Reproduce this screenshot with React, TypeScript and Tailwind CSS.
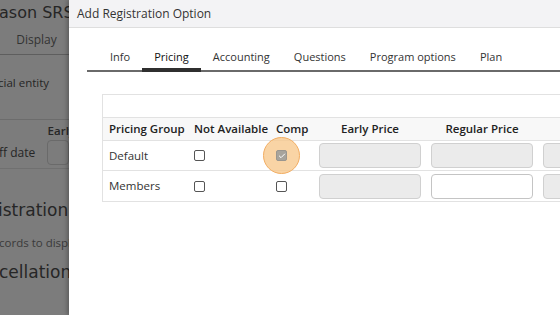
import { Check } from 'lucide-react';

const tabs = ['Info', 'Pricing', 'Accounting', 'Questions', 'Program options', 'Plan'];

// column widths for the pricing grid
const cols = 'grid grid-cols-[85px_82px_44px_112px_112px_112px]';

function Box({ checked, ring }: { checked?: boolean; ring?: boolean }) {
  return (
    <div className="relative w-[11px] h-[11px]">
      {ring && (
        <div className="absolute left-[-13px] top-[-13px] w-[37px] h-[37px] rounded-full bg-[#f7c98f]/80 border border-[#f2ad62]" />
      )}
      <div
        className={
          checked
            ? 'relative w-[11px] h-[11px] rounded-[2px] bg-[#a8a49c] border border-[#9a968f] flex items-center justify-center'
            : 'relative w-[11px] h-[11px] rounded-[2px] bg-white border border-[#555]'
        }
      >
        {checked && <Check size={8} strokeWidth={3} className="text-white" />}
      </div>
    </div>
  );
}

function Input({ disabled }: { disabled?: boolean }) {
  return (
    <div
      className={
        disabled
          ? 'w-[102px] h-[25px] rounded-[4px] border border-[#d0d0d0] bg-[#ebebeb]'
          : 'w-[102px] h-[25px] rounded-[4px] border border-[#c4c4c4] bg-white'
      }
    />
  );
}

export default function App() {
  const rows = [
    { name: 'Default', comp: true, regularDisabled: true },
    { name: 'Members', comp: false, regularDisabled: false },
  ];

  return (
    <div className="flex w-[560px] h-[315px] overflow-hidden bg-white">
      {/* page behind the drawer, dimmed */}
      <div
        className="w-[69px] shrink-0 h-full overflow-hidden bg-[#7c7c7c] text-[#262626] whitespace-nowrap"
        style={{ fontFamily: '"Open Sans", sans-serif' }}
      >
        <div className="h-[25px] text-[16px] leading-[25px] -ml-[1px]" style={{ fontFamily: '"DejaVu Sans", sans-serif' }}>
          ason SRS
        </div>
        <div className="h-[30px] border-b border-[#5e5e5e] flex items-center justify-center pl-[4px] text-[12px] text-[#333]">
          Display
        </div>
        <div className="h-[56px] flex items-center text-[11.5px] -ml-[2px]">cial entity</div>
        <div className="h-[9px] border-b border-[#6c6c6c]" />
        <div className="h-[19px] flex items-end justify-end text-[11.5px] font-semibold -mr-[6px]">Early</div>
        <div className="h-[27px] flex items-center gap-[12px] text-[12px]">
          <span className="-ml-[1px]">ff date</span>
          <div className="w-[40px] h-[25px] rounded-[4px] border border-[#6a6a6a]" />
        </div>
        <div className="border-t border-[#707070] mt-[2px]" />
        <div className="mt-[29px] text-[17px] leading-[24px] -ml-[2px]" style={{ fontFamily: '"DejaVu Sans", sans-serif' }}>
          istration
        </div>
        <div className="mt-[13px] text-[11.5px] leading-[16px] text-[#3a3a3a] -ml-[1px]">cords to displ</div>
        <div className="mt-[9px] text-[17px] leading-[24px] -ml-[1px]" style={{ fontFamily: '"DejaVu Sans", sans-serif' }}>
          cellation
        </div>
      </div>

      {/* drawer */}
      <div
        className="flex-1 h-full overflow-hidden bg-white shadow-[-2px_0_4px_rgba(0,0,0,0.25)]"
        style={{ fontFamily: '"Open Sans", sans-serif' }}
      >
        <div className="h-[28px] bg-[#f3f3f5] border-b border-[#dedede] flex items-center pl-[8px] text-[12px] text-[#333]">
          Add Registration Option
        </div>

        <div className="ml-[18px] mt-[15px] pl-[11px] flex border-b-2 border-[#6a6a6a] text-[11px] text-[#333] whitespace-nowrap">
          {tabs.map((t) => (
            <div
              key={t}
              className={
                t === 'Pricing'
                  ? 'px-3 pt-[5px] pb-[3px] leading-[17px] text-[#111] border-b-[4px] border-[#2f2f2f] -mb-[2px]'
                  : 'px-3 py-[5px] leading-[17px]'
              }
            >
              {t}
            </div>
          ))}
        </div>

        <div className="ml-[33px] mt-[22px] w-[600px] border border-[#e2e2e2] text-[11.5px] text-[#333] whitespace-nowrap">
          <div className="h-[23px] border-b border-[#e2e2e2]" />
          <div className={`${cols} h-[22px] items-center bg-[#f8f8f8] font-semibold text-[#222]`}>
            <div className="pl-[6px]">Pricing Group</div>
            <div className="pl-[6px]">Not Available</div>
            <div className="pl-[6px]">Comp</div>
            <div className="text-center">Early Price</div>
            <div className="text-center">Regular Price</div>
            <div className="text-center" />
          </div>
          {rows.map((r, i) => (
            <div
              key={r.name}
              className={`${cols} items-center border-t border-[#e2e2e2] ${i === 0 ? 'h-[30px]' : 'h-[31px]'}`}
            >
              <div className="pl-[6px]">{r.name}</div>
              <div className="pl-[6px]">
                <Box />
              </div>
              <div className="pl-[6px]">
                <Box checked={r.comp} ring={r.comp} />
              </div>
              <div className="px-[5px]">
                <Input disabled />
              </div>
              <div className="px-[5px]">
                <Input disabled={r.regularDisabled} />
              </div>
              <div className="px-[5px]">
                <Input disabled />
              </div>
            </div>
          ))}
        </div>
      </div>
    </div>
  );
}
